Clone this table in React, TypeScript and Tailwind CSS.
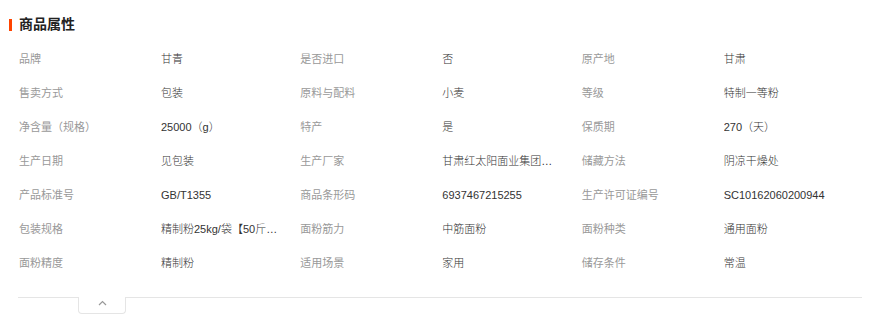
import React from "react";

const rows: [string, string][][] = [
  [["品牌", "甘青"], ["是否进口", "否"], ["原产地", "甘肃"]],
  [["售卖方式", "包装"], ["原料与配料", "小麦"], ["等级", "特制一等粉"]],
  [["净含量（规格）", "25000（g）"], ["特产", "是"], ["保质期", "270（天）"]],
  [["生产日期", "见包装"], ["生产厂家", "甘肃红太阳面业集团有限责任公司"], ["储藏方法", "阴凉干燥处"]],
  [["产品标准号", "GB/T1355"], ["商品条形码", "6937467215255"], ["生产许可证编号", "SC10162060200944"]],
  [["包装规格", "精制粉25kg/袋【50斤装】"], ["面粉筋力", "中筋面粉"], ["面粉种类", "通用面粉"]],
  [["面粉精度", "精制粉"], ["适用场景", "家用"], ["储存条件", "常温"]],
];

export default function App() {
  return (
    <div
      className="w-[875px] h-[333px] bg-white overflow-hidden"
      style={{ fontFamily: "'Liberation Sans','Noto Sans CJK SC',sans-serif" }}
    >
      <div className="pt-[16px] pl-[9px] h-[33px] flex items-start">
        <div className="flex items-center h-[17px]">
          <div className="w-[3px] h-[12px] bg-[#ff4400]" />
          <div className="ml-[7px] text-[14px] font-bold text-[#222] leading-[17px]">商品属性</div>
        </div>
      </div>
      <div className="mt-[9px] ml-[18px] w-[844px] grid grid-cols-3">
        {rows.flat().map(([k, v], i) => (
          <div key={i} className="flex h-[34px] items-center text-[11px] leading-[34px] pl-[1px]">
            <div className="w-[142px] shrink-0 text-[#999] font-normal whitespace-nowrap">{k}</div>
            <div className="w-[118px] text-[#333] font-light whitespace-nowrap overflow-hidden text-ellipsis">{v}</div>
          </div>
        ))}
      </div>
      <div className="mt-[17px] ml-[18px] w-[844px] flex items-start">
        <div className="w-[60px] border-t border-[#e5e5e5]" />
        <div className="w-[48px] h-[17px] border-x border-b border-[#e5e5e5] rounded-b-[4px] flex justify-center pt-[3px]">
          <svg width="9" height="6" viewBox="0 0 9 6" fill="none">
            <path d="M1 5 L4.5 1.5 L8 5" stroke="#999" strokeWidth="1.2" />
          </svg>
        </div>
        <div className="flex-1 border-t border-[#e5e5e5]" />
      </div>
    </div>
  );
}
